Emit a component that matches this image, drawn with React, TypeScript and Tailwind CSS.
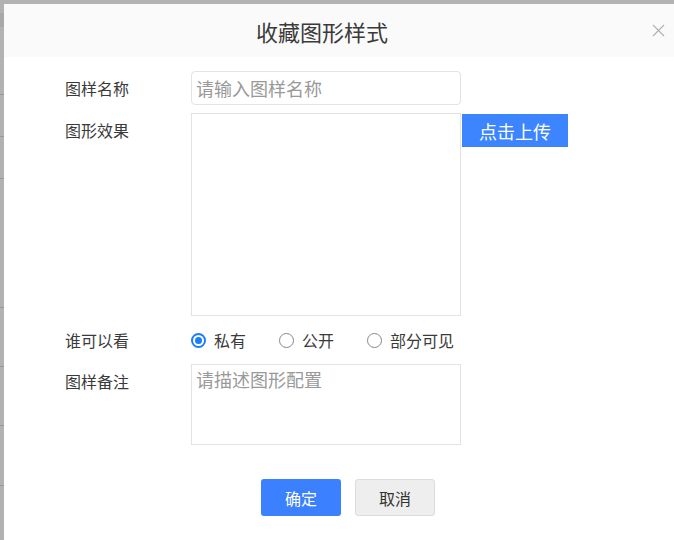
import { useState } from "react";

const font = "font-['Noto_Sans_CJK_SC','Noto_Sans',sans-serif]";

const backdropLines = [94, 136, 178, 307, 366, 425, 485];

const options = ["私有", "公开", "部分可见"];

function Radio({ checked }: { checked: boolean }) {
  if (checked) {
    return (
      <span className="flex h-[15px] w-[15px] items-center justify-center rounded-full border-2 border-[#1a7cff] bg-white">
        <span className="h-[7px] w-[7px] rounded-full bg-[#1a7cff]" />
      </span>
    );
  }
  return <span className="h-[15px] w-[15px] rounded-full border-[1.5px] border-[#888] bg-white" />;
}

export default function App() {
  const [visibility, setVisibility] = useState("私有");

  return (
    <div className={`relative h-[540px] w-[674px] overflow-hidden bg-[#b2b2b2] pl-[4px] pt-[4px] ${font}`}>
      {/* page behind the modal */}
      <div className="absolute left-0 top-[13px] h-[14px] w-[4px] bg-[#a8a8a8]" />
      {backdropLines.map((y) => (
        <div key={y} className="absolute left-0 h-px w-[4px] bg-[#999]" style={{ top: y }} />
      ))}

      <div className="relative flex h-full flex-col bg-white">
        {/* Header */}
        <div className="flex h-[53px] items-center justify-center bg-[#fafafa] pr-[34px]">
          <h1 className="text-[22px] font-normal leading-none text-[#3a3a3a]">收藏图形样式</h1>
        </div>
        <button className="absolute right-[9px] top-[20px] p-0">
          <svg width="13" height="13" viewBox="0 0 13 13" fill="none" stroke="#b0b0b0" strokeWidth="1.1">
            <path d="M1 1 L12 12 M12 1 L1 12" />
          </svg>
        </button>

        {/* Body */}
        <div className="flex flex-col pt-[14px]">
          <div className="flex">
            <label className="w-[187px] pl-[61px] text-[16px] leading-[34px] text-[#3a3a3a]">图样名称</label>
            <input
              placeholder="请输入图样名称"
              className="h-[34px] w-[270px] rounded-[4px] border border-[#e3e3e3] px-[4px] text-[18px] text-[#333] outline-none placeholder:text-[#999]"
            />
          </div>

          <div className="mt-[8px] flex">
            <label className="w-[187px] pl-[61px] text-[16px] leading-[34px] text-[#3a3a3a]">图形效果</label>
            <div className="h-[203px] w-[270px] border border-[#e3e3e3]" />
            <div className="ml-[1px] mt-[1px]">
              <button className="h-[33px] w-[106px] bg-[#3d85ff] text-[18px] leading-none text-white">点击上传</button>
            </div>
          </div>

          <div className="mt-[7px] flex h-[34px] items-center">
            <label className="w-[187px] pl-[61px] text-[16px] leading-[34px] text-[#3a3a3a]">谁可以看</label>
            <div className="flex items-center gap-[33px]">
              {options.map((o) => (
                <div key={o} className="flex cursor-pointer items-center gap-[8px]" onClick={() => setVisibility(o)}>
                  <Radio checked={visibility === o} />
                  <span className="text-[16px] leading-none text-[#3a3a3a]">{o}</span>
                </div>
              ))}
            </div>
          </div>

          <div className="mt-[7px] flex">
            <label className="w-[187px] pl-[61px] text-[16px] leading-[34px] text-[#3a3a3a]">图样备注</label>
            <textarea
              placeholder="请描述图形配置"
              className="h-[81px] w-[270px] resize-none border border-[#e3e3e3] px-[4px] py-[2px] text-[18px] leading-[24px] text-[#333] outline-none placeholder:text-[#999]"
            />
          </div>

          <div className="mt-[34px] flex gap-[14px] pl-[257px]">
            <button className="h-[37px] w-[80px] rounded-[3px] bg-[#3a80ff] text-[16px] text-white">确定</button>
            <button className="h-[37px] w-[80px] rounded-[3px] border border-[#dcdcdc] bg-[#eeeeee] text-[16px] text-[#333]">取消</button>
          </div>
        </div>
      </div>
    </div>
  );
}
